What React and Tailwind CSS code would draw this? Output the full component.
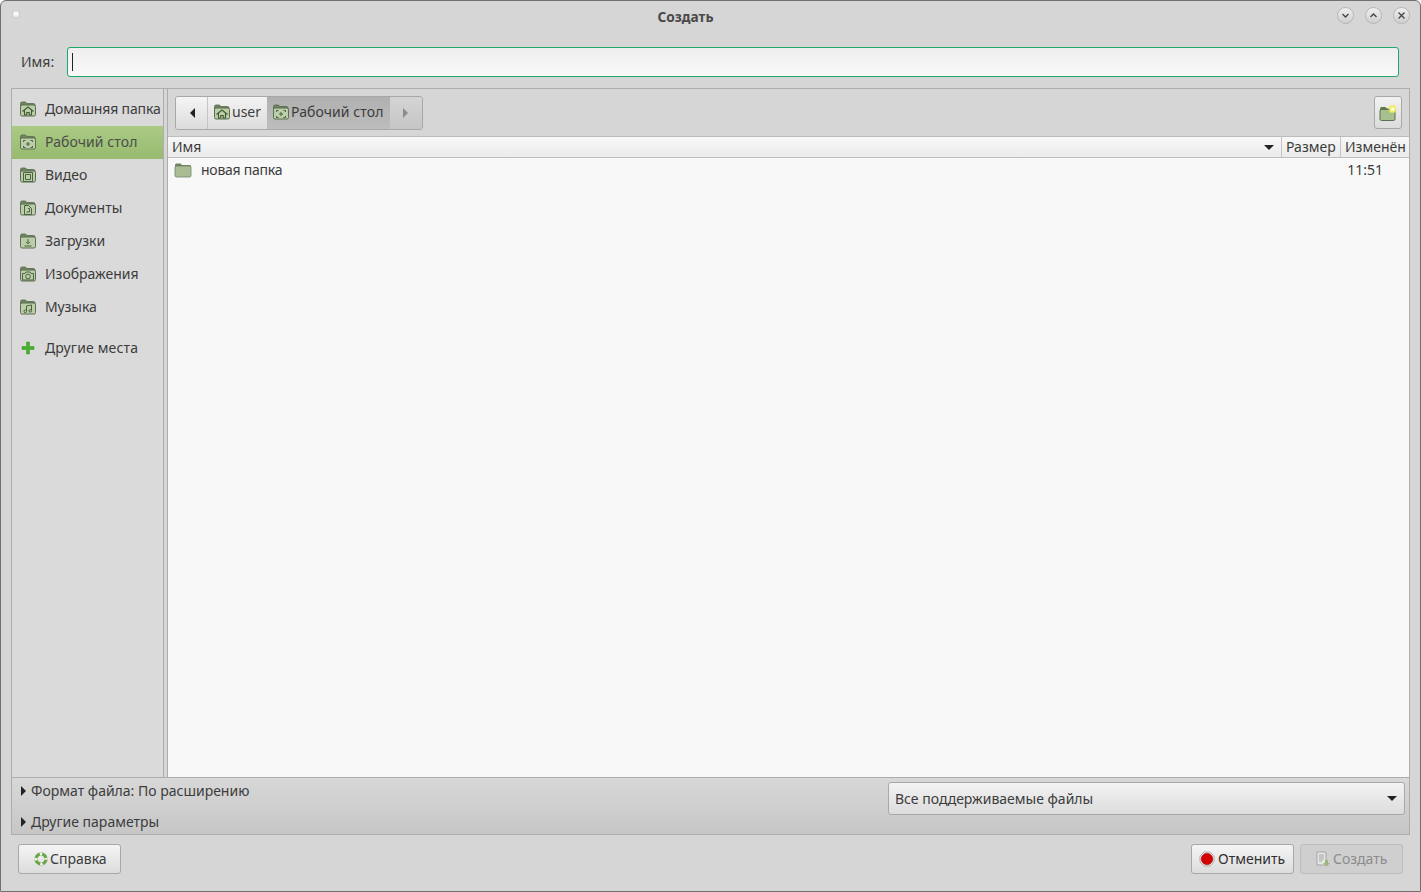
import React from "react";

function Folder({ glyph, size = 18 }) {
  const s = { fill: "none", stroke: "#4a6340", strokeWidth: 1 };
  const g = {
    home: <path d="M3.500 11.500 9 7l5.500 4.500M5.500 10.500V15h2.300v-2.500h2.400V15h2.300v-4.500" fill="none" stroke="#3f5a33" strokeWidth="1.100" />,
    desktop: <path d="M4.500 9v-1.500h2M11.500 7.500h2V9M13.500 13v1.500h-2M6.500 14.500h-2V13M8 10h2v2H8z" {...s} />,
    video: <path d="M4.500 6.500h9v9h-9zM6.500 8.500h5v5h-5z" {...s} />,
    docs: <path d="M5.500 6.500h4l3 3v6h-7zM9 9.500h1.500v3.500H7.500" {...s} />,
    down: <path d="M9 7v4.500M7 9.800l2 2 2-2M5.500 14h7" {...s} />,
    photo: <><path d="M3.500 8.500h2.500l1-1.500h4l1 1.500h2.500v6.500h-11z" {...s} /><circle cx="9" cy="11.500" r="2.300" {...s} /></>,
    music: <><path d="M7.500 13V8l5-1v5.500" {...s} /><circle cx="6.300" cy="13.300" r="1.300" {...s} /><circle cx="11.300" cy="12.800" r="1.300" {...s} /></>,
  }[glyph];
  return (
    <svg width={size} height={size} viewBox="0 0 18 18" className="shrink-0">
      <path d="M1.500 3.500Q1.500 2 3 2h3.500l1.500 1.500h6.500Q16 3.500 16 5v2H1.500z" fill="#6f8560" stroke="#56694a" strokeWidth="0.800" />
      <rect x="1.500" y="5" width="15" height="11" rx="1.500" fill="#bccdaa" stroke="#5c6f50" strokeWidth="1" />
      {g}
    </svg>
  );
}

function SideItem({ glyph, label, active, tracking }) {
  return (
    <div className={`flex items-center h-[33px] pl-[7px] pb-[2px] ${active ? "bg-gradient-to-b from-[#abcb85] to-[#97ba6f] text-[#4c4c4c]" : "text-[#3c3c3c]"}`}>
      <Folder glyph={glyph} />
      <span className={`ml-[8px] whitespace-nowrap ${tracking || ""}`}>{label}</span>
    </div>
  );
}

function WinBtn({ children }) {
  return (
    <div className="w-[17px] h-[17px] rounded-full border border-[#b5b5b5] bg-gradient-to-b from-[#f0f0f0] to-[#cfcfcf] flex items-center justify-center">
      <svg width="9" height="9" viewBox="0 0 9 9" fill="none" stroke="#444" strokeWidth="1.300">{children}</svg>
    </div>
  );
}

function Triangle() {
  return <div className="w-0 h-0 border-y-[5px] border-y-transparent border-l-[5px] border-l-[#222] shrink-0" />;
}

const btn = "h-[30px] rounded-[3px] border border-[#a8a8a8] bg-gradient-to-b from-[#f5f5f5] to-[#dcdcdc] flex items-center";

export default function App() {
  return (
    <div
      className="w-[1421px] h-[892px] bg-[#d6d6d6] border border-[#707070] rounded-t-[6px] flex flex-col overflow-hidden text-[14px] leading-[20px] text-[#3c3c3c]"
      style={{ fontFamily: '"Noto Sans", sans-serif' }}
    >
      {/* title bar */}
      <div className="h-[29px] shrink-0 flex items-center pl-[11px] pr-[10px]">
        <div className="w-[8px] h-[8px] rounded-full bg-[#f6f6f6] border border-[#c8c8c8] mb-[4px]" />
        <div className="flex-1 text-center font-bold text-[13.7px] text-[#4a4a4a] pl-[14px] pt-[2px]">Создать</div>
        <div className="flex gap-[11px]">
          <WinBtn><path d="M1.500 3 4.500 6l3-3" /></WinBtn>
          <WinBtn><path d="M1.500 6 4.500 3l3 3" /></WinBtn>
          <WinBtn><path d="M1.500 1.500l6 6M7.500 1.500l-6 6" /></WinBtn>
        </div>
      </div>

      {/* name row */}
      <div className="h-[30px] mt-[17px] shrink-0 flex items-center pl-[20px] pr-[21px]">
        <span className="w-[46px] shrink-0 text-[#3c3c3c]">Имя:</span>
        <div className="flex-1 h-[30px] rounded-[3px] border border-[#1fa968] bg-gradient-to-b from-[#eeeeee] to-[#f9f9f9] flex items-center pl-[4px]">
          <div className="w-px h-[18px] bg-[#222]" />
        </div>
      </div>

      {/* main */}
      <div className="mt-[11px] mx-[10px] h-[747px] shrink-0 border border-[#adadad] flex flex-col">
        <div className="flex h-[688px] shrink-0">
          {/* sidebar */}
          <div className="w-[152px] shrink-0 bg-[#dadada] border-r border-[#adadad] pt-[4px] overflow-hidden">
            <SideItem glyph="home" label="Домашняя папка" tracking="tracking-[-0.15px]" />
            <SideItem glyph="desktop" label="Рабочий стол" active tracking="tracking-[0.08px]" />
            <SideItem glyph="video" label="Видео" />
            <SideItem glyph="docs" label="Документы" />
            <SideItem glyph="down" label="Загрузки" />
            <SideItem glyph="photo" label="Изображения" />
            <SideItem glyph="music" label="Музыка" tracking="tracking-[-0.1px]" />
            <div className="flex items-center h-[33px] pl-[7px] pb-[2px] mt-[8px]">
              <svg width="18" height="18" viewBox="0 0 18 18" className="shrink-0">
                <path d="M7.500 3h3v4.500H15v3h-4.500V15h-3v-4.500H3v-3h4.500z" fill="#45b02c" stroke="#3a9424" strokeWidth="0.500" />
              </svg>
              <span className="ml-[8px] tracking-[0.15px]">Другие места</span>
            </div>
          </div>
          {/* right */}
          <div className="flex-1 min-w-0 ml-[3px] flex flex-col border-l border-[#adadad]">
            <div className="h-[47px] shrink-0 flex items-center pl-[7px] pr-[7px] justify-between">
              <div className="h-[34px] flex rounded-[3px] border border-[#a8a8a8] overflow-hidden">
                <div className="w-[32px] bg-gradient-to-b from-[#f5f5f5] to-[#dcdcdc] border-r border-[#c4c4c4] flex items-center justify-center pl-[2px]">
                  <div className="w-0 h-0 border-y-[5px] border-y-transparent border-r-[5px] border-r-[#222]" />
                </div>
                <div className="w-[59px] bg-gradient-to-b from-[#f3f3f3] to-[#dcdcdc] flex items-center pl-[5px] pb-[2px]">
                  <Folder glyph="home" />
                  <span className="ml-px">user</span>
                </div>
                <div className="w-[123px] bg-gradient-to-b from-[#b0b0b0] to-[#bdbdbd] flex items-center pl-[5px] pb-[2px]">
                  <Folder glyph="desktop" />
                  <span className="ml-px whitespace-nowrap text-[#3c3c3c] tracking-[0.08px]">Рабочий стол</span>
                </div>
                <div className="w-[32px] bg-gradient-to-b from-[#d4d4d4] to-[#c6c6c6] flex items-center justify-center pr-[2px]">
                  <div className="w-0 h-0 border-y-[5px] border-y-transparent border-l-[5px] border-l-[#8c8c8c]" />
                </div>
              </div>
              <div className="w-[28px] h-[33px] rounded-[3px] border border-[#a8a8a8] bg-gradient-to-b from-[#f2f2f2] to-[#dcdcdc] flex items-center justify-center">
                <svg width="20" height="20" viewBox="0 0 20 20">
                  <path d="M2 6Q2 4 3.500 4h4l1.500 1.500H16V8H2z" fill="#65794f" />
                  <rect x="2" y="6.500" width="15" height="11" rx="1.500" fill="#a8bf8f" stroke="#5c6f50" strokeWidth="1" />
                  <circle cx="14.500" cy="6" r="4" fill="#f2ef3f" opacity="0.700" />
                  <path d="M14.500 2.500l1 2.300 2.500.3-1.800 1.700.5 2.500-2.200-1.200-2.200 1.200.5-2.500L11 5.100l2.500-.3z" fill="#fffde0" stroke="#f0e830" strokeWidth="0.500" />
                </svg>
              </div>
            </div>
            {/* table */}
            <div className="flex-1 min-h-0 bg-[#f8f8f8] border-t border-[#bdbdbd] flex flex-col">
              <div className="h-[21px] shrink-0 flex bg-gradient-to-b from-[#f8f8f8] to-[#ebebeb] border-b border-[#bdbdbd] leading-[19px]">
                <div className="flex-1 pl-[4px] pr-[7px] pb-[2px] flex items-center justify-between border-r border-[#c4c4c4]">
                  <span>Имя</span>
                  <div className="w-0 h-0 border-x-[5px] border-x-transparent border-t-[5px] border-t-[#222] mt-[2px]" />
                </div>
                <div className="w-[59px] pl-[4px] pb-[2px] border-r border-[#c4c4c4] flex items-center">Размер</div>
                <div className="w-[68px] pl-[4px] pb-[2px] flex items-center">Изменён</div>
              </div>
              <div className="h-[24px] flex items-center pl-[6px] pr-[26px]">
                <svg width="18" height="18" viewBox="0 0 18 18" className="shrink-0">
                  <path d="M1 4Q1 2.500 2.500 2.500h4L8 4h8q1 0 1 1v2H1z" fill="#6f8560" />
                  <rect x="1" y="5" width="16" height="11" rx="1.500" fill="#a9bd95" stroke="#71846a" strokeWidth="0.800" />
                </svg>
                <span className="ml-[9px] flex-1 tracking-[-0.25px]">новая папка</span>
                <span>11:51</span>
              </div>
            </div>
          </div>
        </div>
        {/* options */}
        <div className="flex-1 min-h-0 border-t border-[#adadad] bg-gradient-to-b from-[#d8d8d8] to-[#c6c6c6] flex justify-between pl-[9px] pr-[4px]">
          <div className="flex flex-col">
            <div className="flex items-center gap-[5px] h-[24px] mt-px"><Triangle /><span>Формат файла: По расширению</span></div>
            <div className="flex items-center gap-[5px] h-[24px] mt-[7px]"><Triangle /><span>Другие параметры</span></div>
          </div>
          <div className="w-[517px] h-[33px] mt-[4px] rounded-[3px] border border-[#a8a8a8] bg-gradient-to-b from-[#f3f3f3] to-[#dcdcdc] flex items-center justify-between pl-[6px] pr-[7px]">
            <span>Все поддерживаемые файлы</span>
            <div className="w-0 h-0 border-x-[5px] border-x-transparent border-t-[5px] border-t-[#222]" />
          </div>
        </div>
      </div>

      {/* footer */}
      <div className="mt-[9px] flex justify-between pl-[17px] pr-[17px]">
        <div className={`${btn} w-[103px] pl-[14px]`}>
          <svg width="16" height="16" viewBox="0 0 16 16" className="shrink-0">
            <circle cx="8" cy="8" r="5" fill="none" stroke="#b5b5a8" strokeWidth="3.600" />
            <circle cx="8" cy="8" r="5" fill="none" stroke="#f6f6f2" strokeWidth="2.700" />
            <circle cx="8" cy="8" r="5" fill="none" stroke="#63a840" strokeWidth="2.700" strokeDasharray="5.400 2.450" strokeDashoffset="-0.600" />
          </svg>
          <span className="ml-px">Справка</span>
        </div>
        <div className="flex gap-[6px]">
          <div className={`${btn} w-[103px] pl-[7px]`}>
            <svg width="16" height="16" viewBox="0 0 16 16" className="shrink-0">
              <path d="M5 1h6l4 4v6l-4 4H5l-4-4V5z" fill="#eeeeee" stroke="#a0a0a0" strokeWidth="0.800" />
              <circle cx="8" cy="8" r="5.800" fill="#d40000" stroke="#a80000" strokeWidth="0.500" />
            </svg>
            <span className="ml-[3px] text-[#2f2f2f]">Отменить</span>
          </div>
          <div className="h-[30px] w-[103px] rounded-[3px] border border-[#bcbcbc] bg-[#cfcfcf] flex items-center pl-[14px] text-[#8c8c8c]">
            <svg width="16" height="16" viewBox="0 0 16 16" className="shrink-0">
              <path d="M2 1h9v13H2z" fill="#e6e6e6" stroke="#a5a5a5" strokeWidth="1" />
              <path d="M4 4h5M4 6h5M4 8h5M4 10h3" stroke="#a5a5a5" strokeWidth="1" />
              <path d="M10 9h3v3h2l-3.500 3.500L8 12h2z" fill="#9db57f" />
            </svg>
            <span className="ml-[2px]">Создать</span>
          </div>
        </div>
      </div>
    </div>
  );
}
